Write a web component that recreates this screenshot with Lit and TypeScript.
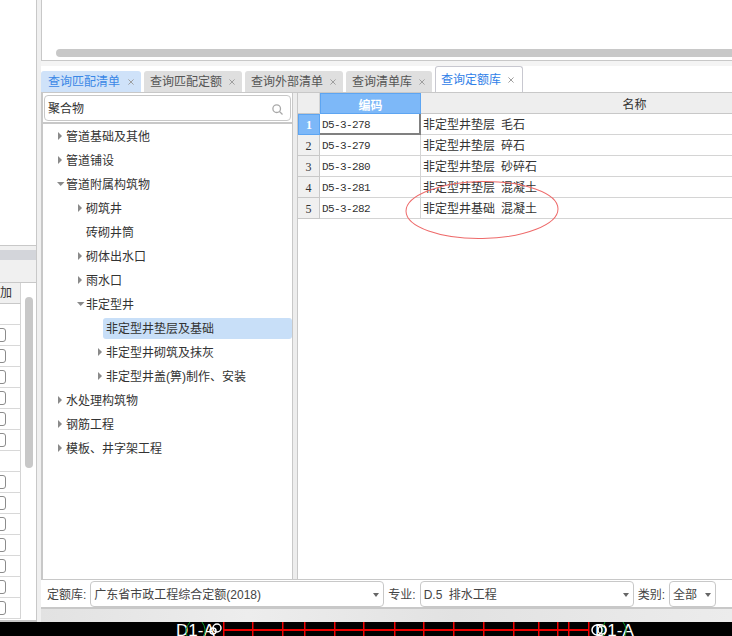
import { LitElement, html, css, svg } from "lit";
import { customElement } from "lit/decorators.js";

const tabs = [
  { t: "查询匹配清单", c: "first" },
  { t: "查询匹配定额", c: "" },
  { t: "查询外部清单", c: "" },
  { t: "查询清单库", c: "" },
  { t: "查询定额库", c: "active" },
];
const tree: { t: string; l: number; a: string; picked?: boolean }[] = [
  { t: "管道基础及其他", l: 0, a: "r" },
  { t: "管道铺设", l: 0, a: "r" },
  { t: "管道附属构筑物", l: 0, a: "d" },
  { t: "砌筑井", l: 1, a: "r" },
  { t: "砖砌井筒", l: 1, a: "" },
  { t: "砌体出水口", l: 1, a: "r" },
  { t: "雨水口", l: 1, a: "r" },
  { t: "非定型井", l: 1, a: "d" },
  { t: "非定型井垫层及基础", l: 2, a: "", picked: true },
  { t: "非定型井砌筑及抹灰", l: 2, a: "r" },
  { t: "非定型井盖(箅)制作、安装", l: 2, a: "r" },
  { t: "水处理构筑物", l: 0, a: "r" },
  { t: "钢筋工程", l: 0, a: "r" },
  { t: "模板、井字架工程", l: 0, a: "r" },
];
const rows = [
  ["D5-3-278", "非定型井垫层 毛石"],
  ["D5-3-279", "非定型井垫层 碎石"],
  ["D5-3-280", "非定型井垫层 砂碎石"],
  ["D5-3-281", "非定型井垫层 混凝土"],
  ["D5-3-282", "非定型井基础 混凝土"],
];
const sideRows = [0, 1, 1, 1, 1, 1, 1, 0, 1, 1, 1, 1, 1, 1, 1];
const redX = [223, 252, 282, 304, 334, 363, 394, 423, 453, 483, 513, 538, 557, 568, 588];

const closeIcon = html`<svg class="x" viewBox="0 0 7 7"><path d="M.5.5l6 6M6.5.5l-6 6"></path></svg>`;
const caret = html`<svg class="caret" viewBox="0 0 6 4"><path d="M0 0h6L3 4z"></path></svg>`;

@customElement("app-root")
export class AppRoot extends LitElement {
  static styles = css`
    :host {
      display: flex;
      flex-direction: column;
      width: 732px;
      height: 636px;
      overflow: hidden;
      background: #f0f0f0;
      color: #333;
      font: 12px/1 "Liberation Sans", "Noto Sans CJK SC", sans-serif;
    }
    .work { display: flex; height: 622px; flex: none; }
    .side {
      width: 37px; flex: none; display: flex; flex-direction: column;
      border-right: 1px solid #c8c8c8; box-sizing: border-box; overflow: hidden;
    }
    .side-top { height: 246px; flex: none; background: #fff; border-bottom: 1px solid #c8c8c8; box-sizing: border-box; }
    .side-gap { height: 4px; flex: none; }
    .side-head { height: 10px; flex: none; background: #d3d5da; }
    .side-tool { height: 23px; flex: none; background: #f0f0f0; border-bottom: 1px solid #c8c8c8; box-sizing: border-box; }
    .side-table { position: relative; flex: 1; background: #fff; border-bottom: 2px solid #c8c8c8; }
    .side-row {
      width: 21px; height: 21px; box-sizing: border-box; display: flex; justify-content: flex-end;
      align-items: center; padding-right: 14px; border-right: 1px solid #d4d4d4; border-bottom: 1px solid #d8d8d8;
    }
    .side-row.hd { justify-content: flex-start; padding: 0; background: #f0f0f0; border-bottom-color: #c8c8c8; }
    .cb { width: 14px; height: 14px; flex: none; box-sizing: border-box; border: 1px solid #8c8c8c; border-radius: 3px; background: #fff; }
    .side-scroll { position: absolute; left: 25px; top: 14px; width: 8px; height: 171px; border-radius: 4px; background: #c8c8c8; }
    .main { flex: 1; min-width: 0; margin-left: 4px; display: flex; flex-direction: column; border-left: 1px solid #c8c8c8; }
    .top { height: 61px; flex: none; background: #fff; border-bottom: 1px solid #c8c8c8; box-sizing: border-box; display: flex; flex-direction: column; justify-content: flex-end; padding: 0 0 3px 14px; }
    .hbar { height: 8px; background: #c8c8c8; border-radius: 4px 0 0 4px; }
    .tabs-wrap { height: 32px; flex: none; box-sizing: border-box; background: linear-gradient(#f4f4f4 0 5px, #fff 5px); border-bottom: 1px solid #c8c8c8; display: flex; align-items: flex-end; gap: 3px; margin-left: -1px; }
    .tab { height: 21px; box-sizing: border-box; display: flex; align-items: center; gap: 7px; padding: 0 7px 0 6px; background: #dfdfdf; color: #555; border-radius: 3px 3px 0 0; }
    .tab.first { background: #cfe2f9; color: #3a87e6; padding-left: 7px; gap: 8px; }
    .tab.active { height: 26px; background: #fff; color: #2f80e8; border: 1px solid #c8c8d0; border-bottom: 0; padding: 0 8px 0 5px; }
    .x { width: 6px; height: 6px; flex: none; }
    .x path { stroke: #9a9a9a; stroke-width: 1.1; fill: none; }
    .body { flex: 1; min-height: 0; display: flex; }
    .tree-pane { width: 251px; flex: none; box-sizing: border-box; background: #fff; border-left: 1px solid #c8c8c8; border-right: 1px solid #c8c8c8; display: flex; flex-direction: column; }
    .search { height: 31px; flex: none; box-sizing: border-box; padding: 2px 1px 1px 1px; border-bottom: 2px solid #c8c8c8; }
    .search-box { height: 26px; box-sizing: border-box; border: 1px solid #c8c8c8; border-radius: 4px; display: flex; align-items: center; justify-content: space-between; padding: 2px 7px 0 3px; color: #333; }
    .search-box svg { width: 11px; height: 11px; }
    .search-box circle, .search-box path { stroke: #a8a8a8; stroke-width: 1.3; fill: none; }
    .node { height: 24px; flex: none; box-sizing: border-box; padding-top: 2px; display: flex; align-items: center; position: relative; color: #333; }
    .node.l0 { padding-left: 23px; }
    .node.l1 { padding-left: 43px; }
    .node.l2 { padding-left: 63px; }
    .arrow { position: absolute; top: 8px; width: 8px; height: 8px; fill: #8a8a8a; }
    .node.l0 .arrow { left: 14px; }
    .node.l1 .arrow { left: 34px; }
    .node.l2 .arrow { left: 54px; }
    .node.picked::before { content: ""; position: absolute; left: 60px; right: 0; top: 2px; bottom: 1px; background: #c8dff8; border-radius: 3px; }
    .node span { position: relative; }
    .gutter { width: 5px; flex: none; box-sizing: border-box; background: #ededed; border-right: 1px solid #c8c8c8; }
    .grid { flex: 1; min-width: 0; position: relative; background: #fff; overflow: hidden; }
    .row { display: grid; grid-template-columns: 22px 101px 428px; height: 21px; }
    .cell { box-sizing: border-box; padding-top: 2px; display: flex; align-items: center; border-right: 1px solid #d4d4d4; border-bottom: 1px solid #d4d4d4; min-width: 0; }
    .hd .cell { background: #eeeeee; padding-top: 4px; justify-content: center; border-bottom-color: #c8c8c8; }
    .hd .code { background: #7db8f8; color: #fff; font-weight: 700; border: 1px solid #5da5f2; }
    .num { background: #f0f0f0; justify-content: center; font: 12px "Liberation Serif", serif; border-right-color: #c8c8c8; border-bottom-color: #c8c8c8; }
    .num.on { background: #7db8f8; color: #fff; font-weight: 700; border: 1px solid #5da5f2; }
    .code-cell { padding-left: 2px; font: 11px "Liberation Mono", monospace; letter-spacing: -0.6px; }
    .code-cell.on { border-right: 2px solid #808080; border-bottom: 2px solid #808080; }
    .name { padding-left: 2px; word-spacing: 2.67px; }
    .ring { position: absolute; left: 107px; top: 87px; width: 154px; height: 60px; pointer-events: none; }
    .ring ellipse { fill: none; stroke: #ee6a6a; stroke-width: 1; }
    .toolbar { height: 30px; flex: none; box-sizing: border-box; margin-left: -1px; background: #fff; border-top: 1px solid #c8c8c8; border-bottom: 2px solid #c8c8c8; display: flex; align-items: center; padding: 1px 0 0 6px; color: #444; }
    .lbl { padding-top: 2px; }
    .sel { height: 26px; box-sizing: border-box; border: 1px solid #c8c8c8; border-radius: 4px; display: flex; align-items: center; justify-content: space-between; padding: 2px 3px 0; margin: 0 4px; }
    .sel.a { width: 294px; }
    .sel.b { width: 214px; word-spacing: 3px; }
    .sel.c { width: 47px; margin-right: 0; }
    .caret { width: 6px; height: 4px; fill: #666; margin-right: 1px; }
    .foot { height: 13px; flex: none; margin-left: -1px; background: linear-gradient(90deg, #e2e2e2, #ededed 30%, #e2e2e2 60%, #ececec); }
    .canvas { flex: 1; min-height: 0; background: #000; display: block; width: 732px; height: 14px; }
    .canvas text { fill: #fff; font: 17px "Liberation Sans", sans-serif; }
  `;

  render() {
    return html`
      <div class="work">
        <div class="side">
          <div class="side-top"></div>
          <div class="side-gap"></div>
          <div class="side-head"></div>
          <div class="side-tool"></div>
          <div class="side-table">
            <div class="side-row hd"><span>加</span></div>
            ${sideRows.map((r) => html`<div class="side-row">${r ? html`<div class="cb"></div>` : ""}</div>`)}
            <div class="side-scroll"></div>
          </div>
        </div>
        <div class="main">
          <div class="top"><div class="hbar"></div></div>
          <div class="tabs-wrap">
            ${tabs.map((t) => html`<div class="tab ${t.c}"><span>${t.t}</span>${closeIcon}</div>`)}
          </div>
          <div class="body">
            <div class="tree-pane">
              <div class="search">
                <div class="search-box">
                  <span>聚合物</span>
                  <svg viewBox="0 0 11 11"><circle cx="4.7" cy="4.7" r="3.8"></circle><path d="M7.5 7.5L10.5 10.5"></path></svg>
                </div>
              </div>
              ${tree.map(
                (n) => html`<div class="node l${n.l} ${n.picked ? "picked" : ""}">
                  ${n.a === "r" ? html`<svg class="arrow" viewBox="0 0 8 8"><path d="M1 0l4 4-4 4z"></path></svg>` : ""}
                  ${n.a === "d" ? html`<svg class="arrow" viewBox="0 0 8 8"><path d="M0 2h7.5L3.7 6z"></path></svg>` : ""}
                  <span>${n.t}</span>
                </div>`
              )}
            </div>
            <div class="gutter"></div>
            <div class="grid">
              <div class="row hd">
                <div class="cell"></div>
                <div class="cell code">编码</div>
                <div class="cell">名称</div>
              </div>
              ${rows.map(
                (r, i) => html`<div class="row">
                  <div class="cell num ${i === 0 ? "on" : ""}">${i + 1}</div>
                  <div class="cell code-cell ${i === 0 ? "on" : ""}">${r[0]}</div>
                  <div class="cell name">${r[1]}</div>
                </div>`
              )}
              <svg class="ring" viewBox="0 0 154 60"><ellipse cx="77" cy="30" rx="76" ry="28.5" transform="rotate(-1 77 30)"></ellipse></svg>
            </div>
          </div>
          <div class="toolbar">
            <span class="lbl">定额库:</span>
            <div class="sel a"><span>广东省市政工程综合定额(2018)</span>${caret}</div>
            <span class="lbl">专业:</span>
            <div class="sel b"><span>D.5 排水工程</span>${caret}</div>
            <span class="lbl">类别:</span>
            <div class="sel c"><span>全部</span>${caret}</div>
          </div>
          <div class="foot"></div>
        </div>
      </div>
      <svg class="canvas" viewBox="0 0 732 14">
        <rect x="223" y="7" width="365" height="2" fill="#f00000"></rect>
        ${redX.map((x) => svg`<rect x="${x}" y="0" width="1.5" height="14" fill="#f00000"></rect>`)}
        <text x="176" y="14">D1-A</text>
        <text x="595" y="14">D1-A</text>
        <path d="M190 0Q184 7 187 14M202 0Q207 7 204 14M605 0Q601 7 604 14M623 0Q628 7 625 14" stroke="#0a9a2a" stroke-width="1" fill="none"></path>
        <circle cx="217" cy="6" r="4" fill="none" stroke="#fff" stroke-width="1.5"></circle>
        <circle cx="213" cy="9" r="3" fill="none" stroke="#fff" stroke-width="1.5"></circle>
        <circle cx="597" cy="8" r="5" fill="none" stroke="#fff" stroke-width="1.5"></circle>
        <circle cx="602" cy="8" r="4" fill="none" stroke="#fff" stroke-width="1.5"></circle>
      </svg>
    `;
  }
}
